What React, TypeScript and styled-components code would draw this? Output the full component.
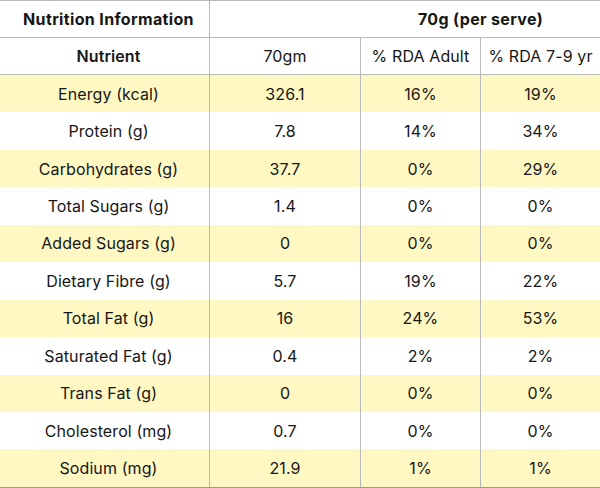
import React from "react";
import styled, { createGlobalStyle } from "styled-components";

const Global = createGlobalStyle`
  html, body { margin: 0; padding: 0; background: #ffffff; }
  body { font-family: Inter, "Noto Sans", sans-serif; color: #161616; }
`;

const Table = styled.table`
  width: 600px;
  table-layout: fixed;
  border-collapse: separate;
  border-spacing: 0;
  border-top: 1px solid #b9b9b9;
  border-bottom: 1px solid #9a9a9a;
  font-size: 16px;
`;

const Cell = styled.td<{ $last?: boolean; $head?: boolean; $weight?: number; $first?: boolean }>`
  padding: 0;
  padding-left: ${(p) => (p.$first ? "8px" : "0")};
  text-align: center;
  vertical-align: middle;
  white-space: nowrap;
  font-weight: ${(p) => p.$weight ?? 400};
  letter-spacing: ${(p) => ((p.$weight ?? 400) >= 700 ? "0.35px" : "0.1px")};
  height: ${(p) => (p.$head ? "36px" : "37.45px")};
  border-right: ${(p) => (p.$last ? "none" : "1px solid #b9b9b9")};
  border-bottom: ${(p) => (p.$head ? "1px solid #b9b9b9" : "none")};
  box-sizing: content-box;
`;

const Row = styled.tr<{ $shade?: boolean }>`
  background: ${(p) => (p.$shade ? "#fff8c3" : "#ffffff")};
`;

const data: [string, string, string, string][] = [
  ["Energy (kcal)", "326.1", "16%", "19%"],
  ["Protein (g)", "7.8", "14%", "34%"],
  ["Carbohydrates (g)", "37.7", "0%", "29%"],
  ["Total Sugars (g)", "1.4", "0%", "0%"],
  ["Added Sugars (g)", "0", "0%", "0%"],
  ["Dietary Fibre (g)", "5.7", "19%", "22%"],
  ["Total Fat (g)", "16", "24%", "53%"],
  ["Saturated Fat (g)", "0.4", "2%", "2%"],
  ["Trans Fat (g)", "0", "0%", "0%"],
  ["Cholesterol (mg)", "0.7", "0%", "0%"],
  ["Sodium (mg)", "21.9", "1%", "1%"],
];

export default function App() {
  return (
    <>
      <Global />
      <Table>
        <colgroup>
          <col style={{ width: 210 }} />
          <col style={{ width: 151 }} />
          <col style={{ width: 120 }} />
          <col style={{ width: 119 }} />
        </colgroup>
        <tbody>
          <Row>
            <Cell $head $first $weight={700}>Nutrition Information</Cell>
            <Cell $head $last />
            <Cell $head $last colSpan={2} $weight={700}>70g (per serve)</Cell>
          </Row>
          <Row>
            <Cell $head $first $weight={600}>Nutrient</Cell>
            <Cell $head>70gm</Cell>
            <Cell $head>% RDA Adult</Cell>
            <Cell $head $last>% RDA 7-9 yr</Cell>
          </Row>
          {data.map((r, i) => (
            <Row key={r[0]} $shade={i % 2 === 0}>
              <Cell $first>{r[0]}</Cell>
              <Cell>{r[1]}</Cell>
              <Cell>{r[2]}</Cell>
              <Cell $last>{r[3]}</Cell>
            </Row>
          ))}
        </tbody>
      </Table>
    </>
  );
}
